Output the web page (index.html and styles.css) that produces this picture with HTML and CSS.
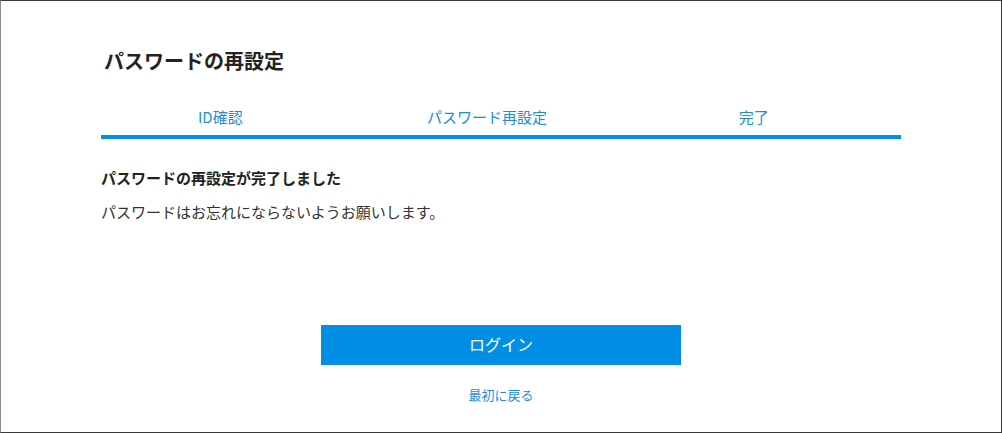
FILE: index.html
```html
<!DOCTYPE html>
<html lang="ja">
  <head>
    <meta charset="UTF-8" />
    <meta name="viewport" content="width=device-width, initial-scale=1.0" />
    <title>パスワードの再設定</title>
    <link rel="stylesheet" href="styles.css">
  </head>

  <body>
    <div class="frame">
      <div class="container">
        <h2>パスワードの再設定</h2>

        <!-- Steps -->
        <ul class="steps">
          <li>ID確認</li>
          <li>パスワード再設定</li>
          <li>完了</li>
        </ul>
        <div class="progress"></div>

        <div class="message">
          <h3>パスワードの再設定が完了しました</h3>
          <p>パスワードはお忘れにならないようお願いします。</p>
        </div>

        <div class="actions">
          <button type="button">ログイン</button>
          <a href="#" class="back-link">最初に戻る</a>
        </div>
      </div>
    </div>
  </body>
</html>
```

FILE: styles.css
```css
* {
  box-sizing: border-box;
}

body {
  font-family: "Noto Sans CJK JP", "Noto Sans", sans-serif;
  margin: 0;
  padding: 0;
  background-color: #fff;
  color: #333;
}

.frame {
  height: 433px;
  border: 1px solid #3a3a3a;
  border-left-color: #8a8a8a;
  padding-top: 46px;
}

.container {
  width: 800px;
  margin-left: 100px;
}

h2 {
  margin: 0 0 0 3px;
  font-size: 20px;
  line-height: 28px;
  font-weight: bold;
  color: #222;
}

.steps {
  display: flex;
  list-style: none;
  margin: 31px 14px 0 -14px;
  padding: 0;
}

.steps li {
  flex: 1;
  text-align: center;
  font-size: 15px;
  line-height: 22px;
  color: #1a8de0;
}

.progress {
  height: 4px;
  margin-top: 7px;
  background-color: #0090e5;
}

.message {
  margin-top: 28px;
}

.message h3 {
  margin: 0;
  font-size: 15px;
  line-height: 22px;
  font-weight: bold;
  color: #222;
}

.message p {
  margin: 12px 0 0;
  font-size: 15px;
  line-height: 22px;
  color: #333;
}

.actions {
  display: flex;
  flex-direction: column;
  align-items: center;
  margin-top: 102px;
}

button {
  width: 360px;
  height: 40px;
  padding: 0 0 3px;
  background-color: #008fe5;
  color: #fff;
  border: none;
  cursor: pointer;
  font-family: inherit;
  font-size: 16px;
}

.back-link {
  margin-top: 20px;
  font-size: 13px;
  line-height: 20px;
  color: #1a8de0;
  text-decoration: none;
}
```
